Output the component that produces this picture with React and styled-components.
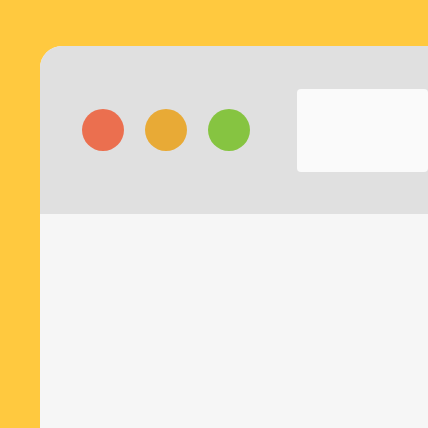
import React from "react";
import styled, { createGlobalStyle } from "styled-components";

const GlobalStyle = createGlobalStyle`
    html, body {
        margin: 0;
        padding: 0;
        width: 428px;
        height: 428px;
        overflow: hidden;
        background: #ffc93f;
        font-family: "Liberation Sans", Arial, sans-serif;
    }
`;

const Page = styled.div`
    width: 428px;
    height: 428px;
    padding: 46px 0 0 40px;
    box-sizing: border-box;
    overflow: hidden;
`;

const Window = styled.div`
    width: 480px;
    height: 382px;
    display: flex;
    flex-direction: column;
    border-top-left-radius: 22px;
    overflow: hidden;
    background: #f6f6f6;
`;

const Toolbar = styled.div`
    height: 168px;
    flex-shrink: 0;
    display: flex;
    align-items: center;
    padding-left: 42px;
    background: #e0e0e0;
`;

const Dots = styled.div`
    display: flex;
    gap: 21px;
`;

const Dot = styled.span`
    width: 42px;
    height: 42px;
    border-radius: 50%;
    background: ${(props) => props.color};
`;

const AddressBar = styled.div`
    width: 131px;
    height: 83px;
    margin-left: 47px;
    margin-top: 1px;
    border-radius: 4px;
    background: #fafafa;
`;

const Content = styled.div`
    flex: 1;
    background: #f6f6f6;
`;

const App = () => {
    return (
        <>
            <GlobalStyle />
            <Page>
                <Window>
                    <Toolbar>
                        <Dots>
                            <Dot color="#eb6f4f" />
                            <Dot color="#e8aa36" />
                            <Dot color="#86c441" />
                        </Dots>
                        <AddressBar />
                    </Toolbar>
                    <Content />
                </Window>
            </Page>
        </>
    );
};

export default App;
